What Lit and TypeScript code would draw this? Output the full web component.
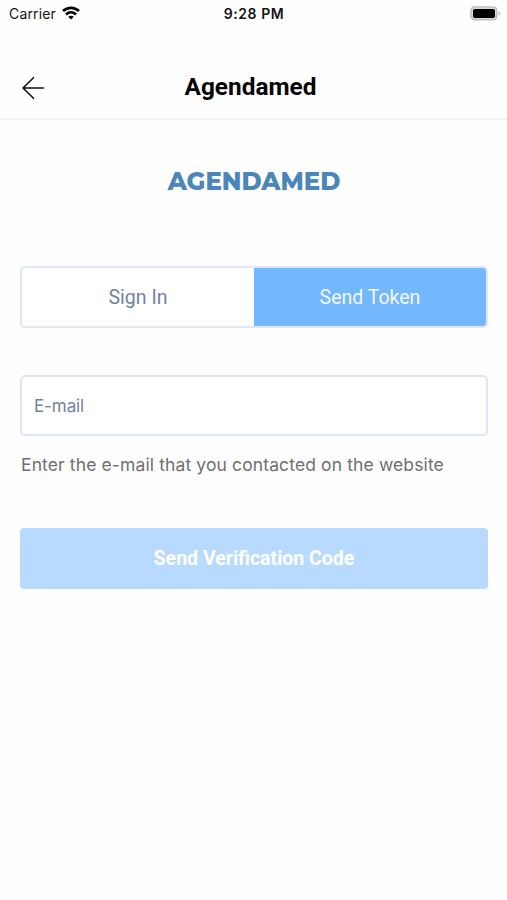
import { LitElement, html, css } from "lit";
import { customElement, state } from "lit/decorators.js";

@customElement("status-bar")
class StatusBar extends LitElement {
  static styles = css`
    :host {
      display: grid;
      grid-template-columns: 1fr auto 1fr;
      align-items: center;
      box-sizing: border-box;
      height: 28px;
      padding: 0 6px 0 9px;
      color: #151515;
      font: 400 14px/28px Inter, sans-serif;
    }
    .carrier { display: flex; align-items: center; gap: 6px; letter-spacing: 0.15px; }
    .time { font-weight: 600; letter-spacing: 0.55px; margin-right: 2px; }
    .battery { justify-self: end; }
    svg { display: block; margin-top: -2px; }
  `;

  render() {
    return html`
      <div class="carrier">
        <span>Carrier</span>
        <svg width="18" height="14" viewBox="0 0 18 14" fill="none" stroke="#050505" stroke-width="2.7">
          <path d="M1 5.1C5.6 0.7 12.4 0.7 17 5.1" />
          <path d="M4 8.4C6.9 5.7 11.1 5.7 14 8.4" />
          <path d="M9 13.6L6.2 10.8C7.8 9.3 10.2 9.3 11.8 10.8Z" fill="#050505" stroke="none" />
        </svg>
      </div>
      <div class="time">9:28 PM</div>
      <svg class="battery" width="31" height="15" viewBox="0 0 31 15">
        <rect x="0.9" y="0.9" width="26" height="13" rx="3.8" fill="#d8d8d8" stroke="#bcbcbc" stroke-width="1.4" />
        <rect x="3" y="3" width="22" height="9" rx="1.8" fill="#000" />
        <path d="M28.6 5.2Q30.4 6 30.4 7.5T28.6 9.8Z" fill="#bcbcbc" />
      </svg>
    `;
  }
}

@customElement("app-root")
class AppRoot extends LitElement {
  @state() private tab = 1;

  static styles = css`
    :host {
      display: block;
      min-height: 900px;
      background: #fefefe;
      font-family: Roboto, sans-serif;
    }
    .header {
      display: grid;
      grid-template-columns: 48px 1fr 48px;
      align-items: center;
      box-sizing: border-box;
      height: 92px;
      padding: 28px 15px 0 9px;
      border-bottom: 2px solid #f2f2f2;
    }
    button { font: inherit; border: 0; padding: 0; margin: 0; background: none; }
    .back { display: grid; place-items: center; height: 48px; padding-top: 2px; }
    .title {
      margin: 0;
      text-align: center;
      font-size: 24.4px;
      line-height: 28px;
      font-weight: 700;
      color: #050505;
    }
    .main { padding: 45px 19px 0 20px; }
    .brand {
      height: 32px;
      line-height: 32px;
      text-align: center;
      font-family: Montserrat, Inter, sans-serif;
      font-size: 24.4px;
      font-weight: 800;
      color: #4a86b8;
    }
    .tabs {
      display: grid;
      grid-template-columns: 1fr 1fr;
      box-sizing: border-box;
      height: 62px;
      margin-top: 69px;
      border: 2px solid #dfe6fd;
      border-radius: 5px;
      overflow: hidden;
      background: #fff;
    }
    .tab { font-size: 19.5px; color: #7482a2; padding-top: 1px; }
    .tab.active { background: #73b7ff; color: #f2f9ff; }
    .field {
      display: block;
      box-sizing: border-box;
      width: 100%;
      height: 61px;
      margin: 47px 0 0;
      padding: 0 12px;
      border: 2px solid #e0e3fd;
      border-radius: 5px;
      background: #fff;
      outline: 0;
      font: 400 17px Inter, sans-serif;
      letter-spacing: -0.1px;
      color: #7482a2;
    }
    .field::placeholder { color: #7482a2; opacity: 1; }
    .hint {
      margin: 16px 0 0 1px;
      font: 400 17.5px/26px Inter, sans-serif;
      letter-spacing: 0.12px;
      color: #707070;
      white-space: nowrap;
    }
    .submit {
      display: block;
      width: 100%;
      height: 61px;
      margin-top: 50px;
      border-radius: 4px;
      background: #b8daff;
      color: #fff;
      font-size: 19.5px;
      font-weight: 700;
    }
  `;

  render() {
    return html`
      <status-bar></status-bar>
      <header class="header">
        <button class="back" aria-label="Back">
          <svg width="24" height="24" viewBox="0 0 24 24" fill="none" stroke="#111" stroke-width="1.6" stroke-linecap="round" stroke-linejoin="round">
            <path d="M22.5 12H2M12.5 1.7L2 12L12.5 22.3" />
          </svg>
        </button>
        <h1 class="title">Agendamed</h1>
      </header>
      <main class="main">
        <div class="brand">AGENDAMED</div>
        <div class="tabs">
          ${["Sign In", "Send Token"].map(
            (label, i) => html`
              <button class="tab ${i === this.tab ? "active" : ""}" @click=${() => (this.tab = i)}>${label}</button>
            `
          )}
        </div>
        <input class="field" type="email" placeholder="E-mail" />
        <p class="hint">Enter the e-mail that you contacted on the website</p>
        <button class="submit">Send Verification Code</button>
      </main>
    `;
  }
}
